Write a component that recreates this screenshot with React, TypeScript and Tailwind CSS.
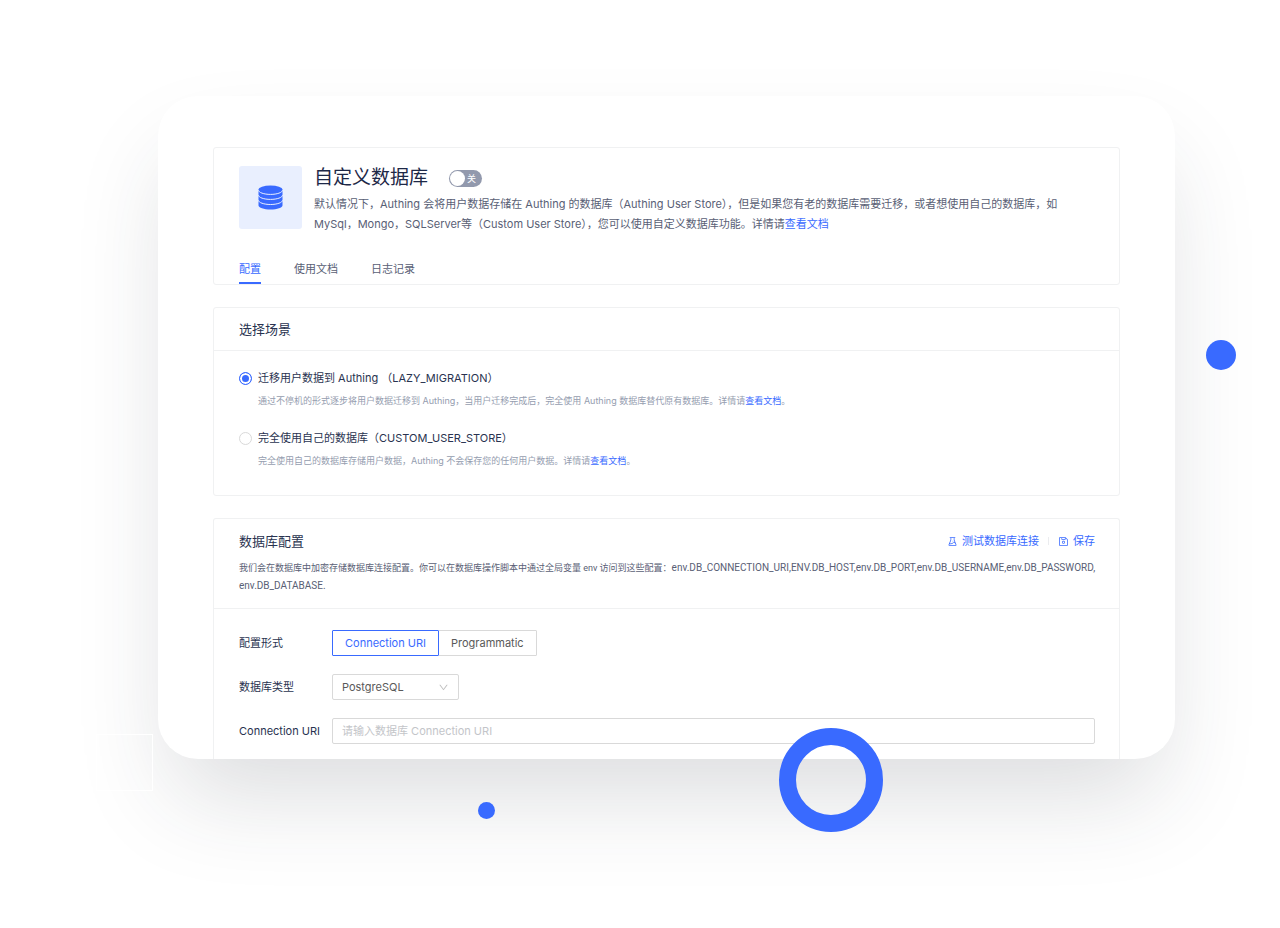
import { useState } from "react";
import type { ReactNode } from "react";
import { AiOutlineDown, AiOutlineExperiment, AiOutlineSave } from "react-icons/ai";

const tabs = ["配置", "使用文档", "日志记录"];

function DatabaseIcon() {
  return (
    <svg viewBox="0 0 25 25" className="h-[25px] w-[25px]" aria-hidden="true">
      <path d="M0.5 4.8v15.8c0 2.3 5.4 4 12 4s12-1.700 12-4V4.800z" fill="#396aff" />
      <ellipse cx="12.500" cy="4.600" rx="12" ry="4.200" fill="#396aff" />
      <g fill="none" stroke="#e9effe" strokeWidth="1">
        <path d="M0.500 5.200c0 2.300 5.400 4.200 12 4.200s12-1.900 12-4.200" />
        <path d="M0.500 10.200c0 2.300 5.400 4.200 12 4.200s12-1.900 12-4.200" />
        <path d="M0.500 15.300c0 2.300 5.400 4.200 12 4.200s12-1.900 12-4.200" />
      </g>
    </svg>
  );
}

function DocLink() {
  return (
    <a href="#docs" className="text-[#396aff]">
      查看文档
    </a>
  );
}

type ScenarioProps = {
  id: string;
  title: string;
  checked: boolean;
  onSelect: () => void;
  children: ReactNode;
};

function Scenario({ id, title, checked, onSelect, children }: ScenarioProps) {
  return (
    <div>
      <div className="flex items-center gap-[6px]">
        <input
          id={id}
          type="radio"
          name="scenario"
          checked={checked}
          onChange={onSelect}
          className="h-[13px] w-[13px] shrink-0 appearance-none rounded-full border border-[#d9d9d9] bg-white checked:border-[#396aff] checked:bg-[#396aff] checked:shadow-[inset_0_0_0_2px_#fff]"
        />
        <label htmlFor={id} className="text-[11px] leading-5 text-[#293350]">
          {title}
        </label>
      </div>
      <p className="mt-[3px] pl-[19px] text-[9px] leading-5 text-[#959daf]">{children}</p>
    </div>
  );
}

export default function App() {
  const [tab, setTab] = useState(0);
  const [enabled, setEnabled] = useState(false);
  const [scenario, setScenario] = useState("lazy");
  const [mode, setMode] = useState("uri");

  return (
    <div className="relative min-h-screen overflow-hidden bg-white pt-24 pr-[105px] pb-[169px] pl-[158px] font-[Inter,'Noto_Sans_CJK_SC',sans-serif] text-[11px] text-[#596075]">
      <main className="relative rounded-[40px] bg-white px-[55px] pt-[51px] shadow-[0_50px_96px_-16px_rgba(40,46,60,0.17)]">
        <div className="flex flex-col gap-[22px]">
          <section className="rounded-[3px] border border-[#f0f1f2] px-[25px] pt-[18px]">
            <div className="flex gap-3">
              <div className="flex h-[63px] w-[63px] shrink-0 items-center justify-center rounded-[3px] bg-[#e9effe]">
                <DatabaseIcon />
              </div>
              <div>
                <div className="flex h-6 items-center gap-[21px]">
                  <h1 className="text-[19px] leading-6 text-[#1d2847]">自定义数据库</h1>
                  <button
                    type="button"
                    role="switch"
                    aria-checked={enabled}
                    aria-label="自定义数据库"
                    onClick={() => setEnabled(!enabled)}
                    className="flex h-[17px] w-[33px] items-center gap-[2px] rounded-full bg-[#9299ad] px-px text-[9px] leading-none text-white"
                  >
                    <span className="h-[15px] w-[15px] rounded-full bg-white" />
                    <span>{enabled ? "开" : "关"}</span>
                  </button>
                </div>
                <p className="mt-1 leading-5">
                  默认情况下，Authing 会将用户数据存储在 Authing 的数据库（Authing User Store），但是如果您有老的数据库需要迁移，或者想使用自己的数据库，如
                  <br />
                  MySql，Mongo，SQLServer等（Custom User Store），您可以使用自定义数据库功能。详情请
                  <DocLink />
                </p>
              </div>
            </div>
            <div role="tablist" className="mt-5 flex gap-[33px]">
              {tabs.map((name, i) => (
                <button
                  key={name}
                  type="button"
                  role="tab"
                  aria-selected={tab === i}
                  onClick={() => setTab(i)}
                  className={
                    tab === i
                      ? "h-[30px] border-b-2 border-[#396aff] pt-[2px] text-[#396aff]"
                      : "h-[30px] border-b-2 border-transparent pt-[2px]"
                  }
                >
                  {name}
                </button>
              ))}
            </div>
          </section>

          <section className="rounded-[3px] border border-[#f0f1f2]">
            <h2 className="border-b border-[#f0f1f2] px-[25px] text-[13px] leading-[42px] text-[#293350]">选择场景</h2>
            <div className="flex flex-col gap-[17px] px-[25px] pt-[17px] pb-6">
              <Scenario
                id="lazy"
                title="迁移用户数据到 Authing （LAZY_MIGRATION）"
                checked={scenario === "lazy"}
                onSelect={() => setScenario("lazy")}
              >
                通过不停机的形式逐步将用户数据迁移到 Authing，当用户迁移完成后，完全使用 Authing 数据库替代原有数据库。详情请
                <DocLink />。
              </Scenario>
              <Scenario
                id="custom"
                title="完全使用自己的数据库（CUSTOM_USER_STORE）"
                checked={scenario === "custom"}
                onSelect={() => setScenario("custom")}
              >
                完全使用自己的数据库存储用户数据，Authing 不会保存您的任何用户数据。详情请
                <DocLink />。
              </Scenario>
            </div>
          </section>

          <section className="rounded-t-[3px] border border-b-0 border-[#f0f1f2]">
            <header className="border-b border-[#f0f1f2] pt-3 pr-[22px] pb-[13px] pl-[25px]">
              <div className="flex items-center justify-between">
                <h2 className="text-[13px] leading-5 text-[#293350]">数据库配置</h2>
                <div className="flex items-center pr-[2px] text-[#396aff]">
                  <button type="button" className="flex items-center gap-1">
                    <AiOutlineExperiment className="h-[11px] w-[11px]" />
                    测试数据库连接
                  </button>
                  <span className="mx-[9px] h-2 w-px bg-[#ebecef]" />
                  <button type="button" className="flex items-center gap-1">
                    <AiOutlineSave className="h-[11px] w-[11px]" />
                    保存
                  </button>
                </div>
              </div>
              <p className="mt-2 font-[Roboto,'Noto_Sans_CJK_SC',sans-serif] text-[9px] leading-[17px]">
                我们会在数据库中加密存储数据库连接配置。你可以在数据库操作脚本中通过全局变量 env 访问到这些配置：
                <span className="text-[10px]">
                  env.DB_CONNECTION_URI,ENV.DB_HOST,env.DB_PORT,env.DB_USERNAME,env.DB_PASSWORD,
                  <br />
                  env.DB_DATABASE.
                </span>
              </p>
            </header>
            <form className="flex flex-col gap-[18px] px-6 pt-[21px] pb-[15px] pl-[25px] text-[#293350]">
              <div className="flex h-[26px] items-center">
                <span id="mode-label" className="w-[93px] shrink-0">
                  配置形式
                </span>
                <div role="group" aria-labelledby="mode-label" className="flex h-full">
                  {[
                    { id: "uri", name: "Connection URI" },
                    { id: "code", name: "Programmatic" },
                  ].map((item) => (
                    <button
                      key={item.id}
                      type="button"
                      aria-pressed={mode === item.id}
                      onClick={() => setMode(item.id)}
                      className={
                        mode === item.id
                          ? "relative z-10 rounded-[1px] border border-[#396aff] px-3 text-[#396aff]"
                          : "-mx-px rounded-[1px] border border-[#d9d9d9] px-3 text-[#595959]"
                      }
                    >
                      {item.name}
                    </button>
                  ))}
                </div>
              </div>
              <div className="flex h-[26px] items-center">
                <label htmlFor="db-type" className="w-[93px] shrink-0">
                  数据库类型
                </label>
                <div className="relative h-full w-[127px]">
                  <select
                    id="db-type"
                    className="h-full w-full appearance-none rounded-[2px] border border-[#d9d9d9] bg-white px-[9px] text-[#595959]"
                  >
                    <option>PostgreSQL</option>
                    <option>MySQL</option>
                    <option>MongoDB</option>
                    <option>SQLServer</option>
                  </select>
                  <AiOutlineDown className="pointer-events-none absolute top-2 right-[10px] h-[11px] w-[11px] text-[#bfbfbf]" />
                </div>
              </div>
              <div className="flex h-[26px] items-center">
                <label htmlFor="db-uri" className="w-[93px] shrink-0">
                  Connection URI
                </label>
                <input
                  id="db-uri"
                  type="text"
                  placeholder="请输入数据库 Connection URI"
                  className="h-full min-w-0 flex-1 rounded-[2px] border border-[#d9d9d9] bg-white px-[9px] placeholder:text-[#c3c5c9]"
                />
              </div>
            </form>
          </section>
        </div>
        <span className="absolute -bottom-[73px] left-[621px] h-[104px] w-[104px] rounded-full border-[17px] border-[#396aff]" />
        <span className="absolute -bottom-[60px] left-[320px] h-[17px] w-[17px] rounded-full bg-[#396aff]" />
        <span className="absolute top-[244px] -right-[61px] h-[30px] w-[30px] rounded-full bg-[#396aff]" />
        <span className="absolute -bottom-8 -left-[62px] h-[57px] w-[57px] border border-white" />
      </main>
    </div>
  );
}
